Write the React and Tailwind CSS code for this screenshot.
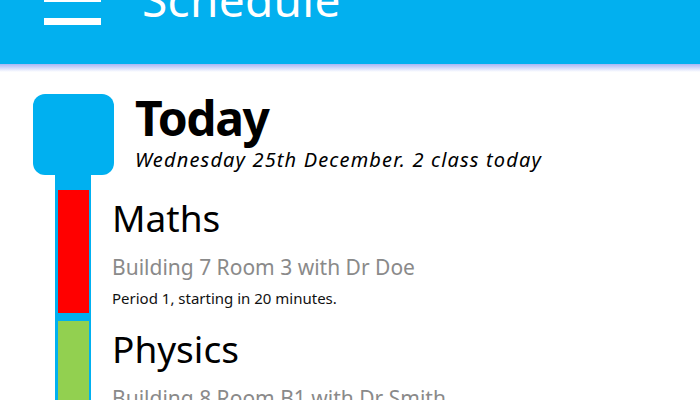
const font = { fontFamily: '"Noto Sans", "Open Sans", sans-serif' };

const classes = [
  {
    name: "Maths",
    where: "Building 7 Room 3 with Dr Doe",
    note: "Period 1, starting in 20 minutes.",
    color: "bg-[#ff0000]",
  },
  {
    name: "Physics",
    where: "Building 8 Room B1 with Dr Smith",
    note: "Period 2, starting in 1 hour.",
    color: "bg-[#92d050]",
  },
];

function ClassRow({ item }) {
  return (
    <div className="flex">
      {/* stem cell */}
      <div className="w-[36px] shrink-0 bg-[#00b0f0] pl-[3px] pr-[2px] py-[4px] flex">
        <div className={`flex-1 ${item.color}`} />
      </div>
      <div className="pl-[21px] pt-[13px] pb-[11px]">
        <div className="text-[37px] leading-[37px] text-black">{item.name}</div>
        <div className="mt-[21px] text-[21px] leading-[21px] text-[#8a8a8a]">{item.where}</div>
        <div className="mt-[13px] text-[15px] leading-[15px] text-[#111]">{item.note}</div>
      </div>
    </div>
  );
}

export default function App() {
  return (
    <div className="w-[700px] h-[400px] overflow-hidden bg-white" style={font}>
      {/* Header, scrolled partly out of view */}
      <div className="h-[64px] bg-[#02b0ef] overflow-hidden">
        <div className="flex items-start -mt-[28px] pl-[44px]">
          <div className="flex flex-col gap-[16px] w-[57px]">
            <div className="h-[7px] bg-white" />
            <div className="h-[7px] bg-white" />
            <div className="h-[7px] bg-white" />
          </div>
          <div className="ml-[41px] mt-[4px] text-[46px] leading-[46px] text-white tracking-[0.3px]">Schedule</div>
        </div>
      </div>
      <div className="h-[8px] bg-gradient-to-b from-[#a9b6f4] to-white" />

      {/* Today */}
      <div className="flex items-start pl-[33px] pt-[22px]">
        <div className="w-[81px] h-[81px] rounded-[12px] bg-[#00b0f0]" />
        <div className="ml-[21px] pt-[2px]">
          <div className="text-[48px] leading-[44px] font-bold tracking-[-1.5px] text-black">Today</div>
          <div className="mt-[10px] text-[20px] leading-[20px] italic tracking-[1.15px] text-black">
            Wednesday 25th December. 2 class today
          </div>
        </div>
      </div>

      {/* Timeline */}
      <div className="ml-[55px] -mt-[2px]">
        <div className="w-[36px] h-[13px] bg-[#00b0f0]" />
        {classes.map((c) => (
          <ClassRow key={c.name} item={c} />
        ))}
      </div>
    </div>
  );
}
